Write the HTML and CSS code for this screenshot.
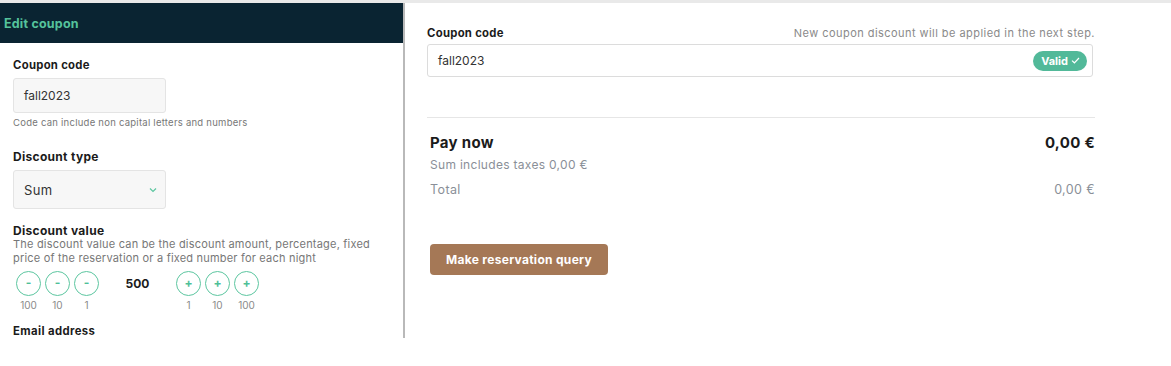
FILE: index.html
```html
<!DOCTYPE html>
<html>
<head>
<meta charset="utf-8">
<link rel="stylesheet" href="styles.css">
</head>
<body>
<div class="page">
  <aside class="editor">
    <div class="editor-head">Edit coupon</div>
    <div class="editor-body">
      <div class="label">Coupon code</div>
      <div class="field">fall2023</div>
      <div class="hint">Code can include non capital letters and numbers</div>

      <div class="label label-type">Discount type</div>
      <div class="field field-select">
        <span>Sum</span>
        <svg class="chev" width="8" height="6" viewBox="0 0 8 6"><path d="M1 1.5 L4 4.5 L7 1.5" fill="none" stroke="#5cc6a0" stroke-width="1.2"/></svg>
      </div>

      <div class="label label-value">Discount value</div>
      <div class="desc">The discount value can be the discount amount, percentage, fixed price of the reservation or a fixed number for each night</div>

      <div class="stepper">
        <div class="step"><div class="circle">-</div><div class="step-num">100</div></div>
        <div class="step"><div class="circle">-</div><div class="step-num">10</div></div>
        <div class="step"><div class="circle">-</div><div class="step-num">1</div></div>
        <div class="value">500</div>
        <div class="step"><div class="circle">+</div><div class="step-num">1</div></div>
        <div class="step"><div class="circle">+</div><div class="step-num">10</div></div>
        <div class="step"><div class="circle">+</div><div class="step-num">100</div></div>
      </div>

      <div class="label label-email">Email address</div>
    </div>
  </aside>

  <main class="summary">
    <div class="code-row">
      <span class="label">Coupon code</span>
      <span class="note">New coupon discount will be applied in the next step.</span>
    </div>
    <div class="code-input">
      <span>fall2023</span>
      <span class="badge">Valid
        <svg width="9" height="7" viewBox="0 0 9 7"><path d="M1 3.6 L3.4 5.8 L8 1" fill="none" stroke="#fff" stroke-width="1.2"/></svg>
      </span>
    </div>
    <div class="totals">
      <div class="row row-pay"><span>Pay now</span><span>0,00 €</span></div>
      <div class="row row-tax"><span>Sum includes taxes 0,00 €</span></div>
      <div class="row row-total"><span>Total</span><span>0,00 €</span></div>
      <button class="btn">Make reservation query</button>
    </div>
  </main>
</div>
</body>
</html>
```

FILE: styles.css
```css
* { box-sizing: border-box; }
html, body { margin: 0; padding: 0; background: #fff; }
body {
  font-family: "Inter", "Liberation Sans", sans-serif;
  color: #1b1b1b;
  width: 1171px;
  height: 366px;
  overflow: hidden;
}
.page {
  display: flex;
  align-items: flex-start;
  border-top: 3px solid #e9e9e9;
}
.editor {
  width: 405px;
  height: 335px;
  border-right: 2px solid #b9b9b9;
  overflow: hidden;
  flex: none;
}
.editor-head {
  height: 40px;
  background: #0a2432;
  color: #55c39c;
  font-weight: 700;
  font-size: 12.5px;
  letter-spacing: 0.2px;
  line-height: 42px;
  padding-left: 4px;
}
.editor-body {
  padding: 15px 0 0 13px;
}
.label {
  font-size: 11.3px;
  font-weight: 700;
  line-height: 14px;
  letter-spacing: 0.3px;
  color: #1b1b1b;
}
.field {
  width: 153px;
  height: 35px;
  margin-top: 6px;
  background: #f7f7f7;
  border: 1px solid #e4e4e4;
  border-radius: 3px;
  font-size: 12px;
  line-height: 33px;
  padding-left: 10px;
  color: #333;
}
.field-select {
  height: 39px;
  display: flex;
  align-items: center;
  justify-content: space-between;
  padding-right: 8px;
  line-height: normal;
  font-size: 13px;
  letter-spacing: 0.3px;
}
.hint {
  font-size: 9.5px;
  letter-spacing: 0.25px;
  color: #777;
  margin-top: 4px;
  line-height: 12px;
}
.label-type { margin-top: 21px; font-size: 12px; }
.label-value { margin-top: 15px; font-size: 12px; }
.desc {
  font-size: 11px;
  letter-spacing: 0.2px;
  line-height: 14px;
  margin-top: -1px;
  color: #777;
  width: 380px;
}
.stepper {
  display: flex;
  gap: 4px;
  margin-top: 6px;
  margin-left: 3px;
}
.step {
  display: flex;
  flex-direction: column;
  align-items: center;
  width: 25px;
}
.circle {
  width: 25px;
  height: 25px;
  border: 1.3px solid #5cc6a0;
  border-radius: 50%;
  color: #4fbf98;
  font-weight: 700;
  font-size: 12px;
  line-height: 22px;
  text-align: center;
}
.step-num {
  font-size: 10px;
  color: #8a8a8a;
  line-height: 13px;
  margin-top: 3px;
}
.value {
  width: 69px;
  text-align: center;
  font-weight: 700;
  font-size: 12px;
  line-height: 25px;
}
.label-email { margin-top: 12px; letter-spacing: 0.4px; }

.summary {
  padding: 23px 0 0 22px;
  width: 690px;
}
.code-row {
  display: flex;
  justify-content: space-between;
  align-items: baseline;
  width: 668px;
}
.note {
  font-size: 11px;
  letter-spacing: 0.45px;
  color: #8a8a8a;
}
.code-input {
  margin-top: 4px;
  width: 666px;
  height: 33px;
  border: 1px solid #dcdcdc;
  border-radius: 3px;
  display: flex;
  align-items: center;
  justify-content: space-between;
  padding: 0 5px 0 10px;
  font-size: 12px;
  color: #333;
}
.badge {
  background: #52b999;
  color: #fff;
  font-weight: 700;
  font-size: 11px;
  height: 20px;
  border-radius: 10px;
  padding: 0 7px 0 8px;
  display: flex;
  align-items: center;
  gap: 3px;
}
.totals {
  margin-top: 40px;
  width: 668px;
  border-top: 1px solid #e6e6e6;
  padding: 16px 0 0 3px;
}
.row {
  display: flex;
  justify-content: space-between;
}
.row-pay {
  font-size: 15px;
  letter-spacing: 0.3px;
  font-weight: 700;
  line-height: 18px;
}
.row-tax {
  font-size: 12px;
  letter-spacing: 0.3px;
  color: #8a8f98;
  margin-top: 6px;
  line-height: 14px;
}
.row-total {
  font-size: 12.5px;
  letter-spacing: 0.4px;
  color: #8a8f98;
  margin-top: 10px;
  line-height: 16px;
}
.btn {
  margin-top: 46px;
  width: 178px;
  height: 31px;
  border: none;
  border-radius: 4px;
  background: #a57856;
  color: #fff;
  font-family: inherit;
  font-weight: 700;
  font-size: 12px;
  letter-spacing: 0.3px;
  padding: 0;
}
```
